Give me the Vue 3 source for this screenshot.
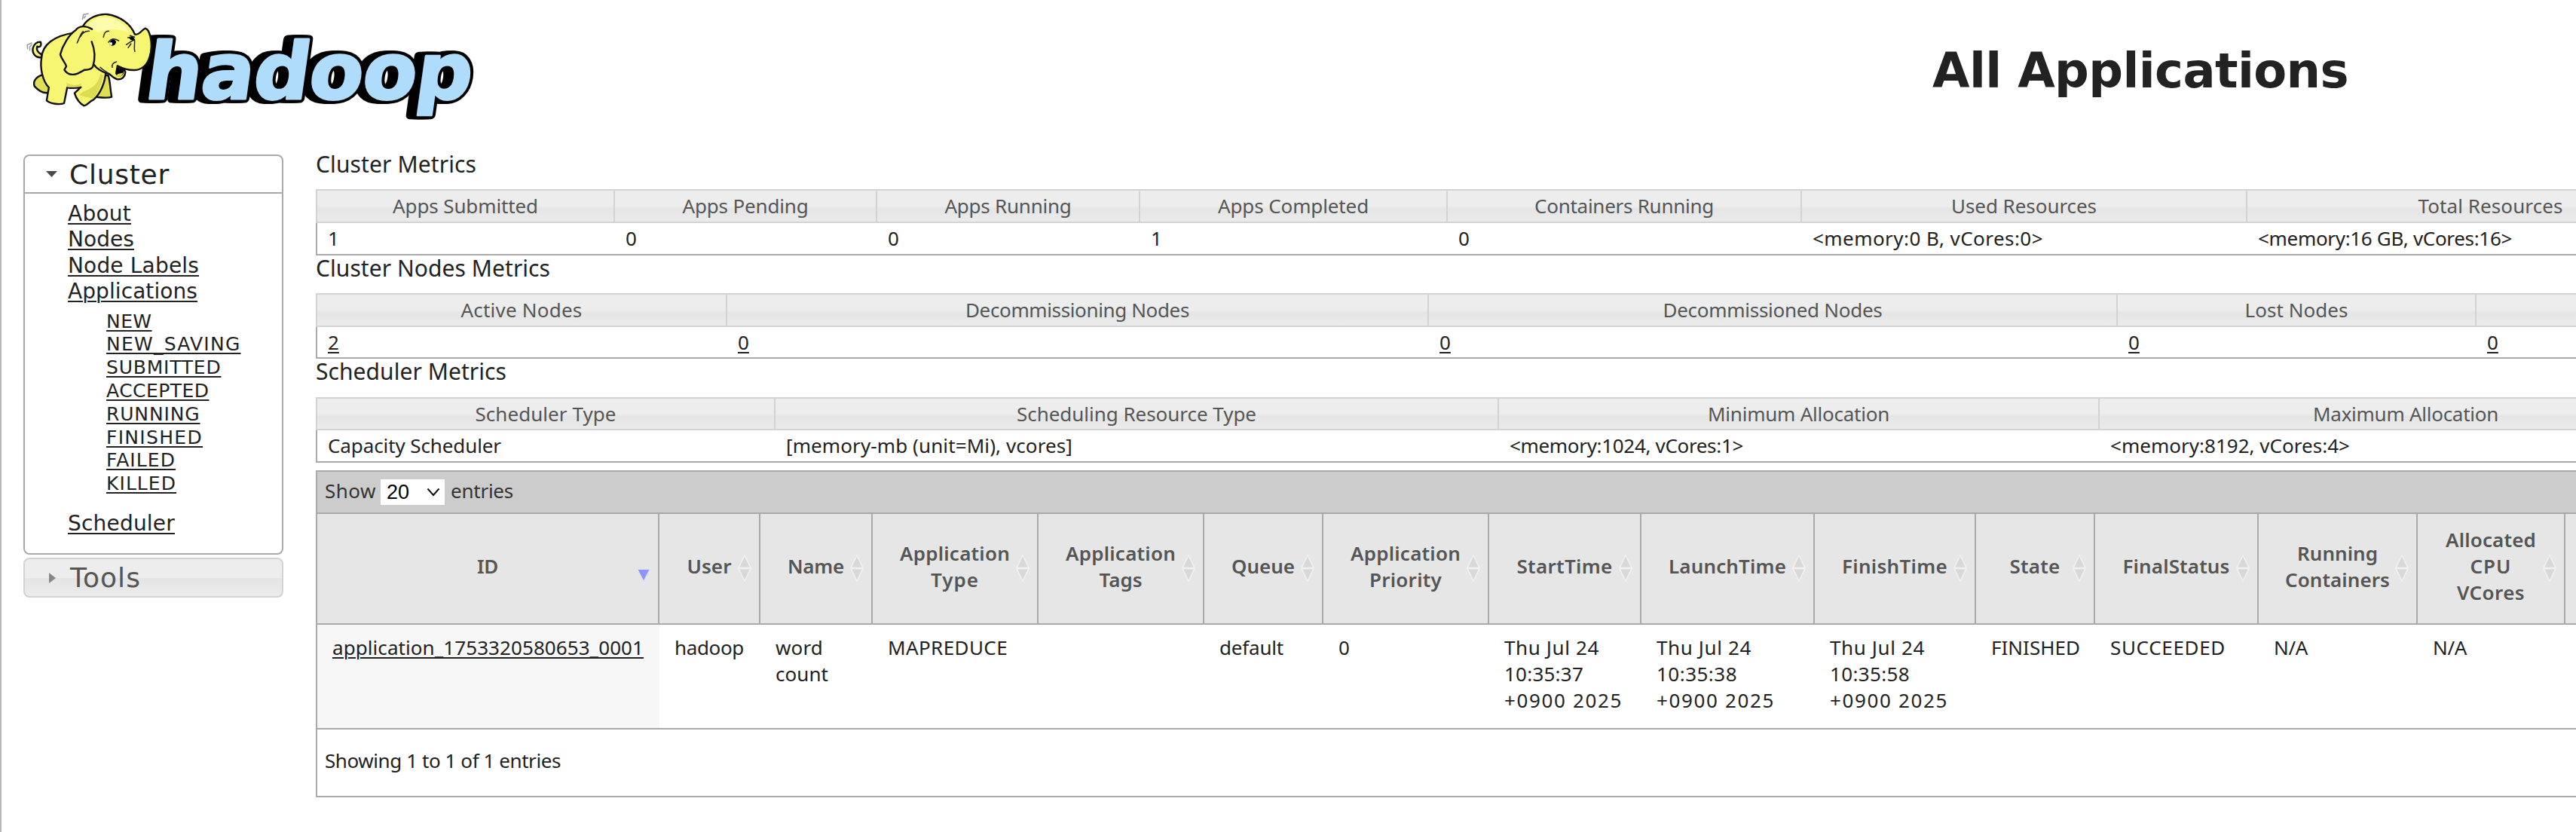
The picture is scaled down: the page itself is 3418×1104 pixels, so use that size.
<script setup>
// Tracks a label out (or in) so that it spans the given number of pixels.
const vFit = {
  mounted(el, { value }) {
    if (!value) return
    const width = el.getBoundingClientRect().width
    el.style.letterSpacing = `${(value - width) / el.textContent.length}px`
  },
}

const links = [
  { text: 'About', w: 84 },
  { text: 'Nodes', w: 88 },
  { text: 'Node Labels', w: 174 },
  { text: 'Applications', w: 172 },
]
const states = [
  { text: 'NEW', w: 60.5 },
  { text: 'NEW_SAVING', w: 178.5 },
  { text: 'SUBMITTED', w: 152.5 },
  { text: 'ACCEPTED', w: 136.5 },
  { text: 'RUNNING', w: 124.5 },
  { text: 'FINISHED', w: 128 },
  { text: 'FAILED', w: 92 },
  { text: 'KILLED', w: 93 },
]

const metrics = [
  {
    title: 'Cluster Metrics', w: 213, key: 'cluster',
    cols: [
      { width: 397, head: 'Apps Submitted', hw: 193, value: '1' },
      { width: 348, head: 'Apps Pending', hw: 167, value: '0' },
      { width: 349, head: 'Apps Running', hw: 168, value: '0' },
      { width: 408, head: 'Apps Completed', hw: 200, value: '1' },
      { width: 470, head: 'Containers Running', hw: 238, value: '0' },
      { width: 591, head: 'Used Resources', hw: 193, value: '<memory:0 B, vCores:0>', vw: 306 },
      { width: 647, head: 'Total Resources', hw: 192, value: '<memory:16 GB, vCores:16>', vw: 337 },
    ],
  },
  {
    title: 'Cluster Nodes Metrics', w: 311, key: 'nodes', link: true,
    cols: [
      { width: 546, head: 'Active Nodes', hw: 161, value: '2' },
      { width: 931, head: 'Decommissioning Nodes', hw: 297, value: '0' },
      { width: 914, head: 'Decommissioned Nodes', hw: 291, value: '0' },
      { width: 476, head: 'Lost Nodes', hw: 137, value: '0' },
      { width: 500, head: '', value: '0' },
    ],
  },
  {
    title: 'Scheduler Metrics', w: 253, key: 'scheduler',
    cols: [
      { width: 610, head: 'Scheduler Type', hw: 187, value: 'Capacity Scheduler', vw: 230 },
      { width: 960, head: 'Scheduling Resource Type', hw: 318, value: '[memory-mb (unit=Mi), vcores]', vw: 380 },
      { width: 797, head: 'Minimum Allocation', hw: 241, value: '<memory:1024, vCores:1>', vw: 310 },
      { width: 814, head: 'Maximum Allocation', hw: 246, value: '<memory:8192, vCores:4>', vw: 318 },
    ],
  },
]

const columns = [
  { width: 454, head: [['ID', 28]], sorted: true, cell: [['application_1753320580653_0001', 413]] },
  { width: 134, head: [['User', 59]], cell: [['hadoop', 92]] },
  { width: 149, head: [['Name', 75]], cell: [['word', 63], ['count', 70]] },
  { width: 220, head: [['Application', 146], ['Type', 64]], cell: [['MAPREDUCE', 159]] },
  { width: 220, head: [['Application', 146], ['Tags', 57]], cell: [] },
  { width: 158, head: [['Queue', 84]], cell: [['default', 85]] },
  { width: 220, head: [['Application', 146], ['Priority', 96]], cell: [['0', 0]] },
  { width: 202, head: [['StartTime', 127]], cell: [['Thu Jul 24', 126], ['10:35:37', 105], ['+0900 2025', 157]] },
  { width: 230, head: [['LaunchTime', 156]], cell: [['Thu Jul 24', 126], ['10:35:38', 107], ['+0900 2025', 157]] },
  { width: 214, head: [['FinishTime', 140]], cell: [['Thu Jul 24', 126], ['10:35:58', 106], ['+0900 2025', 157]] },
  { width: 158, head: [['State', 67]], cell: [['FINISHED', 118]] },
  { width: 217, head: [['FinalStatus', 142]], cell: [['SUCCEEDED', 153]] },
  { width: 211, head: [['Running', 107], ['Containers', 139]], cell: [['N/A', 45]] },
  { width: 196, head: [['Allocated', 120], ['CPU', 55], ['VCores', 90]], cell: [['N/A', 45]] },
  { width: 200, head: [], cell: [] },
]
const sum = (cols) => cols.reduce((total, c) => total + c.width, 0)
</script>

<template>
  <div class="page">
    <header class="top">
      <svg class="logo" width="660" height="180" viewBox="0 0 660 180">
        <g class="wordmark" transform="translate(190 131) skewX(-8)">
          <g class="back">
            <text x="-10" y="0" textLength="433">hadoop</text>
            <text x="-6" y="0" textLength="433">hadoop</text>
            <text x="-3" y="0" textLength="433">hadoop</text>
            <text x="0" y="0" textLength="433">hadoop</text>
          </g>
          <text class="face" x="0" y="0" textLength="433">hadoop</text>
        </g>
        <g class="elephant" transform="scale(.42092 .33333)">
          <path class="skin dark" d="M132 298C112 308 103 325 109 344C122 362 138 372 152 369L160 330Z" />
          <path class="skin dark" d="M325 300L341 300C348 325 346 345 352 386C338 392 318 388 303 386L310 340Z" />
          <path class="skin" d="M131 228C112 232 100 212 104 190C109 172 119 166 128 167C132 182 126 190 117 185C114 199 120 210 131 217Z" />
          <path class="skin" d="M235 130C170 142 133 178 131 230C125 270 135 325 154 348L147 400C160 414 188 418 202 411L212 348C225 352 241 351 255 347L235 371C240 394 253 414 265 421C278 418 282 402 294 398C316 374 332 330 334 280L300 180Z" />
          <path class="shade" d="M208 328C225 343 248 340 258 330L252 346L213 347ZM326 300C320 340 308 370 293 394C282 385 270 390 250 378L262 365C290 355 312 330 317 292Z" />
          <path class="skin" d="M262 103C276 73 308 54 338 57C380 65 413 96 425 137C441 140 446 118 458 113C468 116 471 132 474 146C480 180 477 205 472 225C465 256 448 277 425 279C402 280 387 273 370 262C378 280 396 272 395 288C393 307 384 319 368 315C354 309 350 299 344 294C326 290 316 281 303 268L260 200Z" />
          <path class="glow" d="M278 98C292 72 318 66 340 70C375 76 400 105 408 130C380 120 345 105 310 130Z" />
          <path class="skin" d="M290 116C270 101 250 101 238 121C218 138 197 180 190 217C195 238 207 251 209 264L203 278C214 301 234 299 246 292L267 278C278 279 291 274 293 264C300 235 299 197 289 166" />
          <path class="ink" d="M262 125C250 140 250 155 243 171M281 124C267 123 260 132 252 148M326 148C328 132 334 123 343 124M342 168C350 154 358 150 374 162M403 150L422 146M398 178L412 166L421 160M404 190L413 174M425 205C421 188 426 175 424 157M410 142L424 148M354 268C352 258 356 249 367 246M316 268C326 282 336 284 344 294" />
          <path class="black" d="M347 166C354 152 361 155 366 166C365 183 352 186 346 178ZM407 151C415 144 424 147 424 158C418 164 410 160 407 151ZM367 264C366 285 357 298 376 306C388 302 392 288 390 278C382 279 373 273 367 264Z" />
          <ellipse class="white" cx="350" cy="174" rx="4" ry="6" />
          <path class="tongue" d="M365 301C373 291 382 293 388 289C386 302 378 309 369 307Z" />
          <path class="motion" d="M260 76L263 58L278 55M265 72L270 64M87 194L86 179L100 171M94 200L94 186L100 179" />
        </g>
      </svg>
      <h1><span v-fit="552">All Applications</span></h1>
    </header>

    <div class="main">
      <nav class="side">
        <section class="panel">
          <h3 class="panel-head">
            <svg width="15" height="8" viewBox="0 0 15 8"><path d="M0 0H15L7.5 8Z" fill="#4a4a4a" /></svg>
            <span v-fit="133">Cluster</span>
          </h3>
          <ul class="links">
            <li v-for="l in links" :key="l.text"><a v-fit="l.w">{{ l.text }}</a></li>
          </ul>
          <ul class="states">
            <li v-for="s in states" :key="s.text"><a v-fit="s.w">{{ s.text }}</a></li>
          </ul>
          <ul class="links last"><li><a v-fit="142">Scheduler</a></li></ul>
        </section>
        <h3 class="tools">
          <svg width="9" height="14" viewBox="0 0 9 14"><path d="M0 0V14L9 7Z" fill="#888" /></svg>
          <span v-fit="94">Tools</span>
        </h3>
      </nav>

      <div class="content">
        <section v-for="m in metrics" :key="m.key" :class="['metric', m.key]">
          <h2><span v-fit="m.w">{{ m.title }}</span></h2>
          <table :style="{ width: sum(m.cols) + 'px' }">
            <colgroup><col v-for="(c, i) in m.cols" :key="i" :style="{ width: c.width + 'px' }" /></colgroup>
            <thead>
              <tr><th v-for="(c, i) in m.cols" :key="i"><span v-fit="c.hw">{{ c.head }}</span></th></tr>
            </thead>
            <tbody>
              <tr>
                <td v-for="(c, i) in m.cols" :key="i">
                  <a v-if="m.link">{{ c.value }}</a>
                  <span v-else v-fit="c.vw">{{ c.value }}</span>
                </td>
              </tr>
            </tbody>
          </table>
        </section>

        <section class="apps" :style="{ width: sum(columns) + 'px' }">
          <div class="toolbar">
            <span class="label" v-fit="68">Show</span>
            <div class="select">
              <span>20</span>
              <svg width="18" height="12" viewBox="0 0 18 12"><path d="M1.5 1.5L9 10L16.5 1.5" fill="none" stroke="#111" stroke-width="2" /></svg>
            </div>
            <span class="label" v-fit="83">entries</span>
          </div>
          <table>
            <colgroup><col v-for="(c, i) in columns" :key="i" :style="{ width: c.width + 'px' }" /></colgroup>
            <thead>
              <tr>
                <th v-for="(c, i) in columns" :key="i">
                  <div v-for="[t, w] in c.head" :key="t"><span v-fit="w">{{ t }}</span></div>
                  <svg v-if="c.sorted" class="sort" width="18" height="36" viewBox="0 0 18 36">
                    <path d="M1 19.5H17L9 35Z" fill="#8d94fb" stroke="#dcdcf2" stroke-width="1" />
                  </svg>
                  <svg v-else class="sort" width="18" height="36" viewBox="0 0 18 36">
                    <path d="M9 1L17 17.5H1ZM9 35L17 18.5H1Z" fill="#d8d8d8" stroke="#f1f1f1" stroke-width="1.6" />
                  </svg>
                </th>
              </tr>
            </thead>
            <tbody>
              <tr>
                <td v-for="(c, i) in columns" :key="i" :class="{ sorted: c.sorted }">
                  <div v-for="[t, w] in c.cell" :key="t">
                    <a v-if="c.sorted" v-fit="w">{{ t }}</a>
                    <span v-else v-fit="w">{{ t }}</span>
                  </div>
                </td>
              </tr>
            </tbody>
          </table>
          <div class="info"><span v-fit="313">Showing 1 to 1 of 1 entries</span></div>
        </section>
      </div>
    </div>
  </div>
</template>

<style>
html, body { margin: 0; background: #fff; overflow: hidden; }
</style>

<style scoped>
.page {
  box-sizing: border-box;
  width: 3418px;
  height: 1104px;
  overflow: hidden;
  border-left: 2px solid #b7b7b7;
  color: #222;
  font-family: "Noto Sans", "Open Sans", sans-serif;
  font-size: 26px;
}
h1, h2, h3, ul { margin: 0; padding: 0; font-weight: 400; }
ul { list-style: none; }
a { text-decoration: underline; text-decoration-thickness: 2px; text-underline-offset: 3px; }
span, a { white-space: pre; }

.top { display: flex; height: 201px; }
.logo { display: block; flex: none; margin-left: -2px; overflow: visible; }
h1 {
  margin-left: 1904px;
  font: bold 64px/78px "DejaVu Sans", sans-serif;
  padding-top: 55px;
}
.wordmark text { font: bold 104px "DejaVu Sans", sans-serif; }
.back text { fill: #000; stroke: #000; stroke-width: 11px; stroke-linejoin: round; }
.wordmark .face { fill: #b0dcfc; stroke: #b0dcfc; stroke-width: 3px; stroke-linejoin: round; }
.elephant path, .elephant ellipse { vector-effect: non-scaling-stroke; stroke-linejoin: round; stroke-linecap: round; }
.skin { fill: #f6f672; stroke: #111; stroke-width: 2.4px; }
.dark { fill: #dfdf55; }
.shade { fill: #dcdc52; }
.glow { fill: #fcfcab; }
.ink { fill: none; stroke: #222; stroke-width: 1.5px; }
.black { fill: #000; }
.white { fill: #fff; }
.tongue { fill: #d8d84e; }
.motion { fill: none; stroke: #999; stroke-width: 1.5px; }

.main { display: flex; align-items: flex-start; }
.side { flex: none; width: 345px; margin: 4px 43px 0 29px; font-family: "DejaVu Sans", sans-serif; }
.panel { box-sizing: border-box; height: 531px; border: 2px solid #aaa; border-radius: 8px; }
.panel-head, .tools { display: flex; align-items: center; font-size: 36px; }
.panel-head { height: 48px; border-bottom: 2px solid #aaa; gap: 16px; padding-left: 28px; }
.tools {
  box-sizing: border-box;
  height: 53px;
  margin-top: 4px;
  padding-left: 32px;
  gap: 19px;
  border: 2px solid #d3d3d3;
  border-radius: 8px;
  color: #555;
  background: linear-gradient(#ededed 50%, #e5e5e5 52%, #ebebeb);
}
.links { padding: 10px 0 0 57px; font-size: 28px; line-height: 34.4px; }
.states { padding: 7px 0 0 108px; font-size: 25px; line-height: 30.8px; }
.links.last { padding-top: 20px; }

.content { flex: 1; min-width: 0; overflow: hidden; }
h2 { height: 50px; font-size: 30px; line-height: 34px; }
.scheduler h2 { height: 51px; }
table { table-layout: fixed; border-collapse: separate; border-spacing: 0; }
th, td { box-sizing: border-box; }
.metric th {
  height: 45px;
  padding: 0;
  border: solid #d3d3d3;
  border-width: 2px 2px 2px 0;
  color: #555;
  font-weight: 400;
  line-height: 41px;
  background: linear-gradient(#ededed 50%, #e5e5e5 58%, #ebebeb);
}
.metric td { height: 43px; padding: 0 14px; border-bottom: 2px solid #aaa; line-height: 41px; }
.metric th:first-child { border-left: 2px solid #d3d3d3; }
.metric td:first-child { border-left: 2px solid #aaa; }
.metric.nodes td { height: 42px; line-height: 40px; }
.metric.scheduler th { height: 44px; line-height: 40px; }

.apps { box-sizing: content-box; margin-top: 10px; border: solid #aaa; border-width: 2px 0 2px 2px; }
.toolbar { display: flex; align-items: center; height: 54px; padding-left: 10px; background: #ccc; color: #333; }
.label { padding-bottom: 4px; }
.select {
  box-sizing: border-box;
  display: flex;
  align-items: center;
  justify-content: space-between;
  width: 85px;
  height: 34px;
  margin: 0 8px 0 6px;
  padding: 0 6px 0 8px;
  background: #fff;
  color: #000;
  font: 27px "Liberation Sans", sans-serif;
}
.apps table { width: 100%; }
.apps th {
  position: relative;
  height: 149px;
  padding: 0 0 6px;
  border: solid #aaa;
  border-width: 2px 2px 2px 0;
  background: #e6e6e6;
  color: #555;
  font-weight: 600;
  line-height: 35px;
}
.sort { position: absolute; right: 10px; top: 54px; }
.apps td { height: 139px; padding: 13px 0 0 20px; border-bottom: 2px solid #aaa; vertical-align: top; line-height: 35px; }
.apps td.sorted { background: #f7f7f7; }
.info { height: 88px; padding-left: 10px; line-height: 82px; }
</style>
